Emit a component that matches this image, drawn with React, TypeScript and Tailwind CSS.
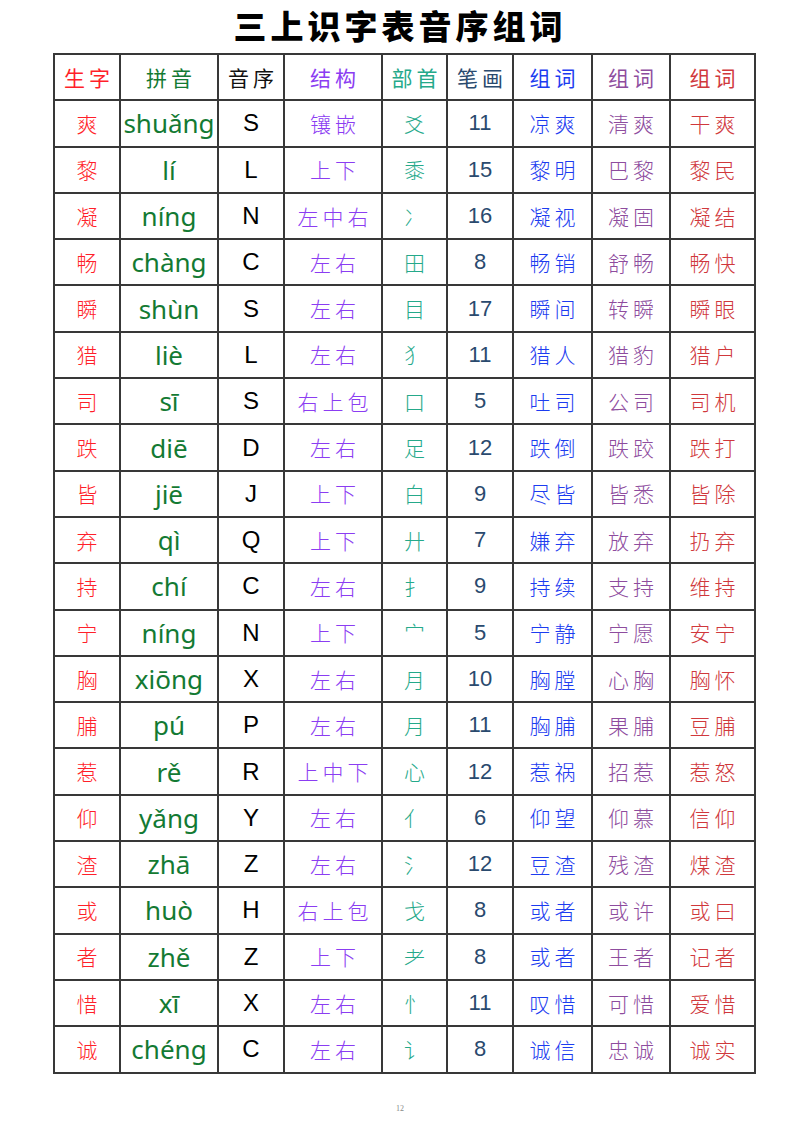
const rows = [
  ["爽", "shuǎng", "S", "镶嵌", "爻", "11", "凉爽", "清爽", "干爽"],
  ["黎", "lí", "L", "上下", "黍", "15", "黎明", "巴黎", "黎民"],
  ["凝", "níng", "N", "左中右", "冫", "16", "凝视", "凝固", "凝结"],
  ["畅", "chàng", "C", "左右", "田", "8", "畅销", "舒畅", "畅快"],
  ["瞬", "shùn", "S", "左右", "目", "17", "瞬间", "转瞬", "瞬眼"],
  ["猎", "liè", "L", "左右", "犭", "11", "猎人", "猎豹", "猎户"],
  ["司", "sī", "S", "右上包", "口", "5", "吐司", "公司", "司机"],
  ["跌", "diē", "D", "左右", "足", "12", "跌倒", "跌跤", "跌打"],
  ["皆", "jiē", "J", "上下", "白", "9", "尽皆", "皆悉", "皆除"],
  ["弃", "qì", "Q", "上下", "廾", "7", "嫌弃", "放弃", "扔弃"],
  ["持", "chí", "C", "左右", "扌", "9", "持续", "支持", "维持"],
  ["宁", "níng", "N", "上下", "宀", "5", "宁静", "宁愿", "安宁"],
  ["胸", "xiōng", "X", "左右", "月", "10", "胸膛", "心胸", "胸怀"],
  ["脯", "pú", "P", "左右", "月", "11", "胸脯", "果脯", "豆脯"],
  ["惹", "rě", "R", "上中下", "心", "12", "惹祸", "招惹", "惹怒"],
  ["仰", "yǎng", "Y", "左右", "亻", "6", "仰望", "仰慕", "信仰"],
  ["渣", "zhā", "Z", "左右", "氵", "12", "豆渣", "残渣", "煤渣"],
  ["或", "huò", "H", "右上包", "戈", "8", "或者", "或许", "或曰"],
  ["者", "zhě", "Z", "上下", "耂", "8", "或者", "王者", "记者"],
  ["惜", "xī", "X", "左右", "忄", "11", "叹惜", "可惜", "爱惜"],
  ["诚", "chéng", "C", "左右", "讠", "8", "诚信", "忠诚", "诚实"],
];

const head = ["生字", "拼音", "音序", "结构", "部首", "笔画", "组词", "组词", "组词"];

const widths = ["w-[66px]", "w-[98px]", "w-[66px]", "w-[98px]", "w-[65px]", "w-[66px]", "w-[79px]", "w-[78px]", "w-[85px]"];

const kai = "font-['Noto_Sans_CJK_SC',sans-serif] font-light text-[21px] tracking-[4px] pl-[4px]";

const cellStyles = [
  `${kai} text-[#ff1f2a]`,
  "font-['Noto_Sans','Noto_Sans_CJK_SC',sans-serif] text-[26px] text-[#137a33]",
  "font-['Liberation_Sans',sans-serif] text-[24px] text-black",
  `${kai} text-[#8b3df2]`,
  `${kai} text-[#25a98a]`,
  "font-['Liberation_Sans',sans-serif] text-[22px] text-[#2a4a6e]",
  `${kai} text-[#1c3cf0]`,
  `${kai} text-[#8e4c9e]`,
  `${kai} text-[#d0383c]`,
];

const headStyles = [
  `${kai} text-[#ff1f2a]`,
  `${kai} text-[#137a33]`,
  `${kai} text-[#111]`,
  `${kai} text-[#8b3df2]`,
  `${kai} text-[#25a98a]`,
  `${kai} text-[#2a4a6e]`,
  `${kai} text-[#1c3cf0]`,
  `${kai} text-[#8e4c9e]`,
  `${kai} text-[#d0383c]`,
];

function App() {
  return (
    <div className="w-[800px] h-[1131px] bg-white relative">
      <h1 className="h-[53px] flex items-center justify-center pb-[2px] font-['Noto_Sans_CJK_SC',sans-serif] font-black text-[33px] tracking-[4px] text-black">
        三上识字表音序组词
      </h1>
      <table className="ml-[53px] border-collapse table-fixed w-[701px]">
        <colgroup>
          {widths.map((w, i) => (
            <col key={i} className={w} />
          ))}
        </colgroup>
        <thead>
          <tr className="h-[46.3px]">
            {head.map((h, i) => (
              <th key={i} className={`border-2 border-[#383838] text-center font-normal leading-none ${headStyles[i]}`}>
                {h}
              </th>
            ))}
          </tr>
        </thead>
        <tbody>
          {rows.map((r, ri) => (
            <tr key={ri} className="h-[46.3px]">
              {r.map((c, ci) => (
                <td key={ci} className={`border-2 border-[#383838] text-center leading-none ${cellStyles[ci]}`}>
                  {c}
                </td>
              ))}
            </tr>
          ))}
        </tbody>
      </table>
      <div className="absolute left-0 right-0 top-[1103px] text-center font-['Liberation_Serif',serif] text-[8px] text-[#888]">
        12
      </div>
    </div>
  );
}

export default App;
